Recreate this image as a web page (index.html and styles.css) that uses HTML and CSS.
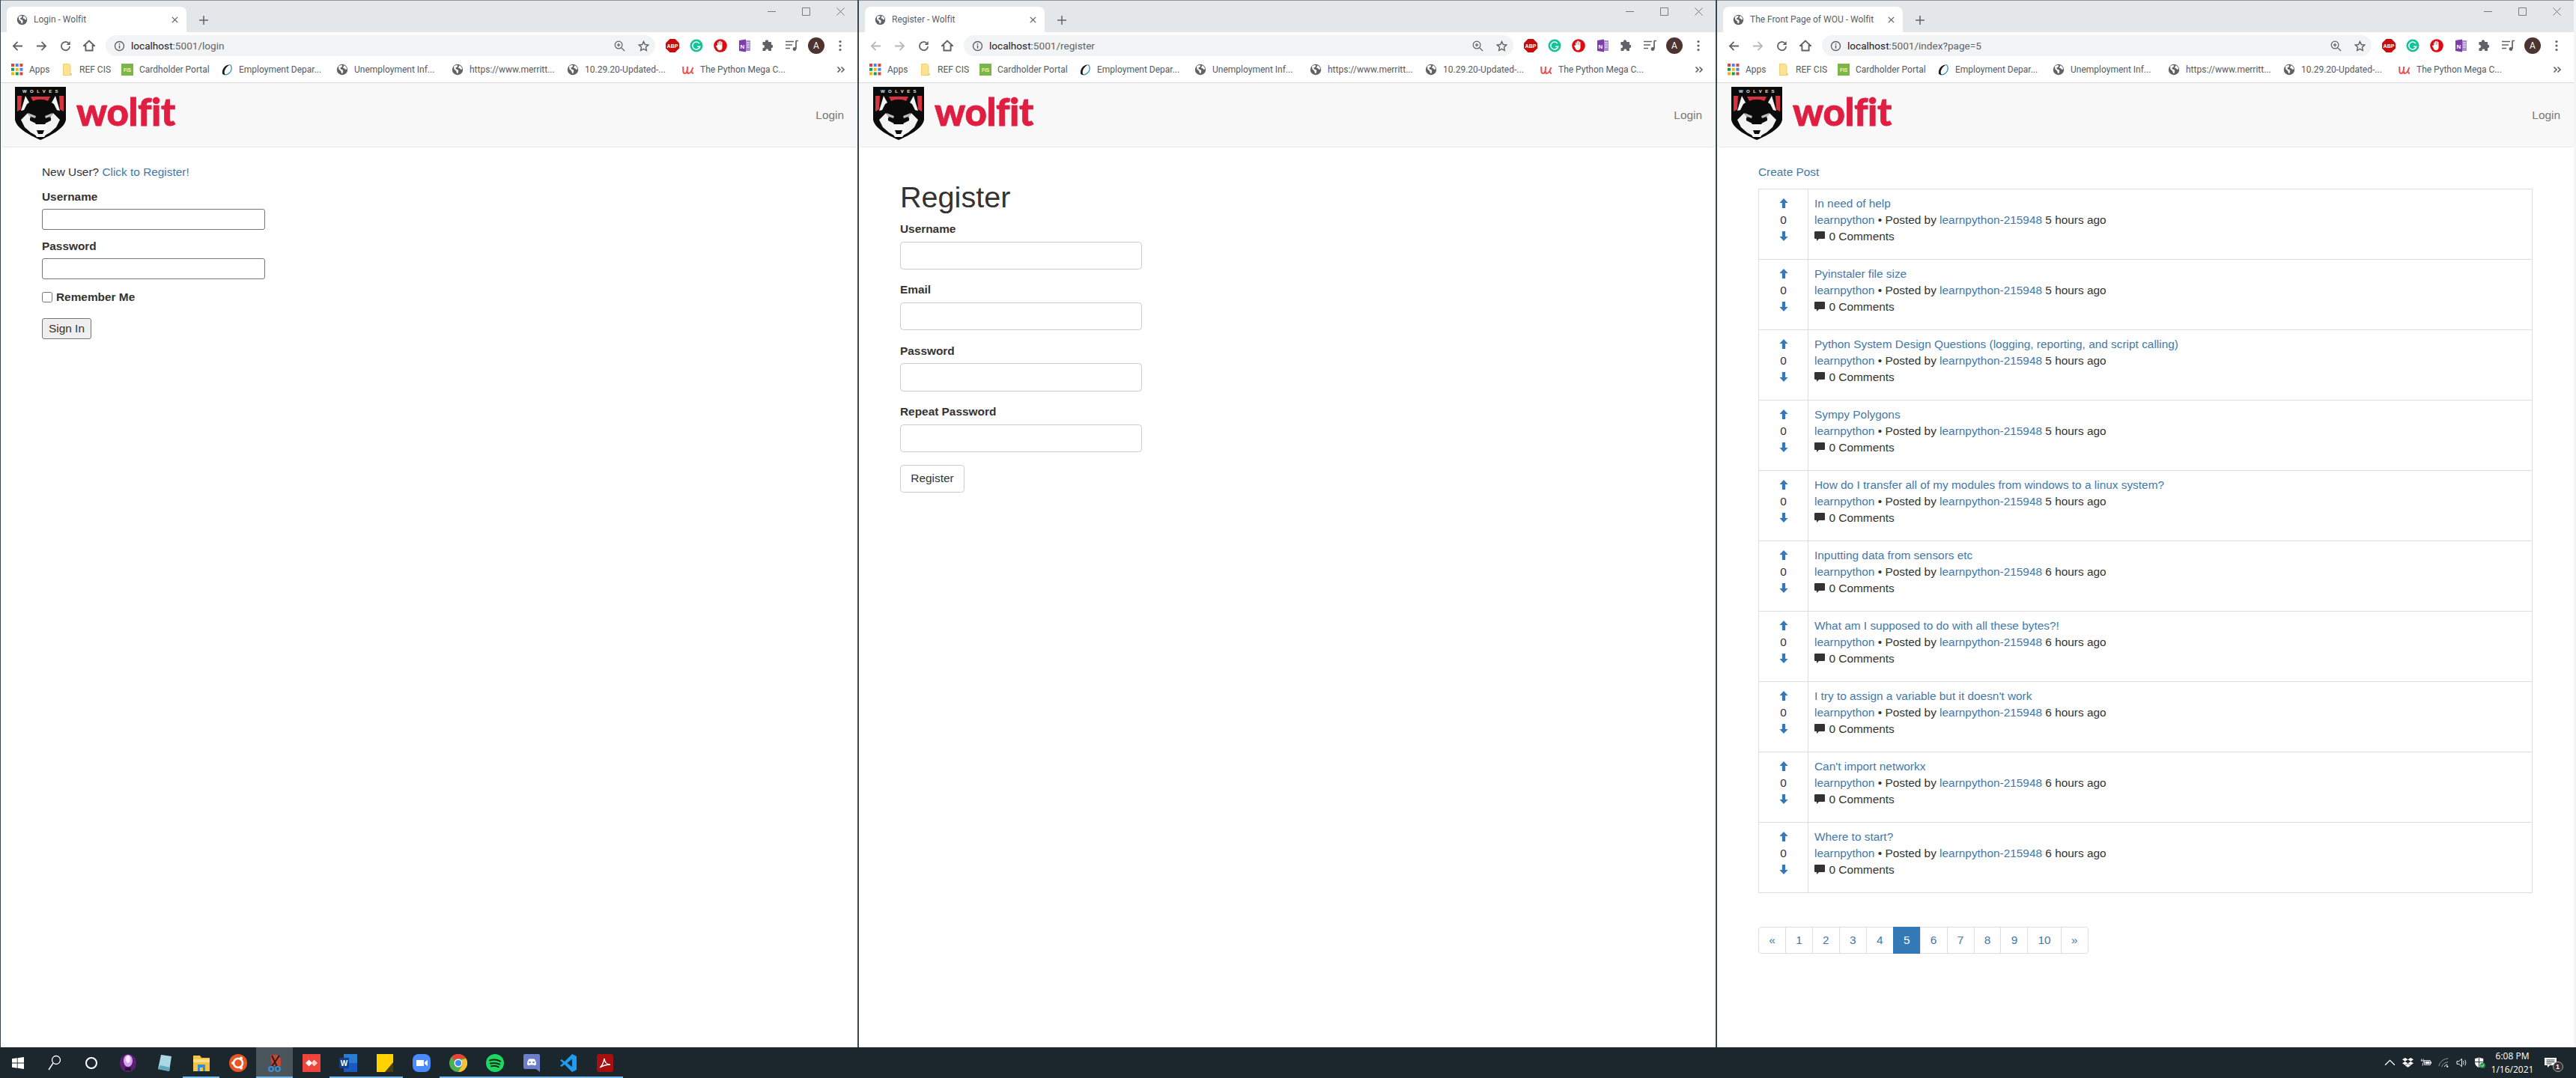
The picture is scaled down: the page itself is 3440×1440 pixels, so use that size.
FILE: index.html
```html
<!DOCTYPE html>
<html lang="en">
<head>
<meta charset="utf-8">
<title>Wolfit windows</title>
<link rel="stylesheet" href="styles.css">
</head>
<body>
<svg class="sprite" xmlns="http://www.w3.org/2000/svg">
  <symbol id="i-globe" viewBox="0 0 16 16"><circle cx="8" cy="8" r="7.2" fill="#5f6368"/><path fill="#fff" d="M3 3.6l3-1.6 2.4.6-1 2-2 1 .5 1.8 2.4.6 1 2-1 3.2-1.2-.4-1-3-2.6-2.2zM10.4 2.2l2.8 2 1 3.2-2 .4-1.2-1.6-2-.4z"/></symbol>
  <symbol id="i-x" viewBox="0 0 12 12"><path d="M2 2l8 8M10 2l-8 8" stroke="#5f6368" stroke-width="1.4" fill="none"/></symbol>
  <symbol id="i-plus" viewBox="0 0 14 14"><path d="M7 1v12M1 7h12" stroke="#5f6368" stroke-width="1.5" fill="none"/></symbol>
  <symbol id="i-back" viewBox="0 0 16 16"><path d="M15 8H2M8 2L2 8l6 6" stroke="currentColor" stroke-width="1.9" fill="none"/></symbol>
  <symbol id="i-fwd" viewBox="0 0 16 16"><path d="M1 8h13M8 2l6 6-6 6" stroke="currentColor" stroke-width="1.9" fill="none"/></symbol>
  <symbol id="i-reload" viewBox="0 0 16 16"><path d="M14 8.5A6 6 0 1 1 12 3.6" stroke="currentColor" stroke-width="1.9" fill="none"/><path fill="currentColor" d="M14.6 1v5.4H9.2z"/></symbol>
  <symbol id="i-home" viewBox="0 0 16 16"><path d="M8 1.5L1 8h2.4v6.5h9.200V8H15z" stroke="currentColor" stroke-width="1.900" fill="none"/></symbol>
  <symbol id="i-info" viewBox="0 0 16 16"><circle cx="8" cy="8" r="6.400" stroke="#5f6368" stroke-width="1.500" fill="none"/><path d="M8 7v4.500M8 4.200v1.600" stroke="#5f6368" stroke-width="1.600"/></symbol>
  <symbol id="i-zoom" viewBox="0 0 16 16"><circle cx="6.500" cy="6.500" r="5.200" stroke="#5f6368" stroke-width="1.300" fill="none"/><path d="M10.500 10.500l4.500 4.500M6.500 4v5M4 6.500h5" stroke="#5f6368" stroke-width="1.400"/></symbol>
  <symbol id="i-star" viewBox="0 0 16 16"><path d="M8 1.600l2 4.300 4.700.6-3.500 3.200.9 4.700L8 12.100l-4.100 2.300.9-4.700L1.300 6.500 6 5.900z" stroke="#5f6368" stroke-width="1.500" fill="none"/></symbol>
  <symbol id="i-abp" viewBox="0 0 18 18"><path fill="#c70d0d" d="M5.500 0h7L18 5.500v7L12.500 18h-7L0 12.500v-7z"/></symbol>
  <symbol id="i-g" viewBox="0 0 18 18"><circle cx="9" cy="9" r="8.500" fill="#15c39a"/><path d="M13 6.200A5 5 0 1 0 13.700 10.200H10" stroke="#fff" stroke-width="1.500" fill="none"/></symbol>
  <symbol id="i-hand" viewBox="0 0 18 18"><circle cx="9" cy="9" r="8.800" fill="#e0090f"/><path fill="#fff" d="M5 8.500V5.200c0-1 1.300-1 1.300 0V8h.4V3.600c0-1 1.300-1 1.300 0V8h.4V3.300c0-1 1.400-1 1.400 0V8h.4V4.600c0-1 1.300-1 1.300 0v7c0 2.200-1.500 3.600-3.500 3.600-1.600 0-2.600-.9-3.200-2.400L3.200 9.800c-.4-1 .8-1.500 1.300-.7z"/></symbol>
  <symbol id="i-one" viewBox="0 0 18 18"><path fill="#7e3ca8" d="M2 2l9-1.500v17L2 16z"/><path fill="#a98ad0" d="M11 2h6v14h-6z"/><path d="M12 5h4M12 8h4M12 11h4" stroke="#fff" stroke-width=".9"/></symbol>
  <symbol id="i-puzzle" viewBox="0 0 16 16"><path fill="#5f6368" d="M6.200 1.200c1.200 0 1.900.9 1.900 1.900v.5h3.400v3.300h.6c1.900 0 1.900 3.800 0 3.800h-.6v3.600H8.200v-.8c0-1.900-3.400-1.900-3.400 0v.8H1.300v-3.500h.8c1.900 0 1.900-3.800 0-3.800h-.8V3.600h3v-.5c0-1 .8-1.900 1.900-1.900z"/></symbol>
  <symbol id="i-music" viewBox="0 0 18 16"><path d="M0 2.500h11M0 7h9M0 11.500h6" stroke="#5f6368" stroke-width="1.500"/><path d="M13.500 1.500h3.500M14 2v10" stroke="#5f6368" stroke-width="1.700"/><circle cx="12" cy="12.500" r="2.400" fill="#5f6368"/></symbol>
  <symbol id="i-dots" viewBox="0 0 4 16"><circle cx="2" cy="2.500" r="1.600" fill="#5f6368"/><circle cx="2" cy="8" r="1.600" fill="#5f6368"/><circle cx="2" cy="13.500" r="1.600" fill="#5f6368"/></symbol>
  <symbol id="i-apps" viewBox="0 0 14 14"><path fill="#db4437" d="M0 0h3.500v3.500H0z"/><path fill="#4285f4" d="M5 0h3.500v3.500H5z"/><path fill="#db4437" d="M10 0h3.500v3.500H10z"/><path fill="#0f9d58" d="M0 5h3.500v3.500H0z"/><path fill="#f4b400" d="M5 5h3.500v3.500H5z"/><path fill="#4285f4" d="M10 5h3.500v3.500H10z"/><path fill="#f4b400" d="M0 10h3.500v3.500H0z"/><path fill="#0f9d58" d="M5 10h3.500v3.500H5z"/><path fill="#db4437" d="M10 10h3.500v3.500H10z"/></symbol>
  <symbol id="i-folder" viewBox="0 0 16 16"><path fill="#fde293" stroke="#f2d06b" d="M2.500.5h8l1.500 2v13H2.500z"/><path fill="#f2d06b" d="M11 13h3v2.500h-3z"/></symbol>
  <symbol id="i-fis" viewBox="0 0 16 16"><path fill="#7ab648" d="M0 0h16v16H0z"/></symbol>
  <symbol id="i-ring" viewBox="0 0 16 16"><path d="M12 1.500C14.500 3 15 7 13 10.500S7 15.500 4 14.500" fill="none" stroke="#2f8fb3" stroke-width="1.300"/><path d="M12.500 1.500C7 .5 1 6 2 13.500c1 1.500 3 1.500 4 1-3-2-1-10 6.500-13z" fill="#1c1c1c"/></symbol>
  <symbol id="i-udemy" viewBox="0 0 16 16"><path d="M1 4c1 4-1 9 2.500 9S7 8 7 4M7 6c-.500 4-.500 7 1.600 7S13 9 14.500 5M13 8c-1 3 0 5 2 5" stroke="#ec5252" stroke-width="2" fill="none"/></symbol>
  <symbol id="i-chev" viewBox="0 0 12 12"><path d="M1.500 2.500L5 6l-3.500 3.500M6.500 2.500L10 6l-3.500 3.500" stroke="#5f6368" stroke-width="1.700" fill="none"/></symbol>
  <symbol id="i-min" viewBox="0 0 12 12"><path d="M0 6h12" stroke="#6a6f73"/></symbol>
  <symbol id="i-max" viewBox="0 0 12 12"><path d="M.5.500h11v11H.5z" stroke="#6a6f73" fill="none"/></symbol>
  <symbol id="i-close" viewBox="0 0 12 12"><path d="M.5.500l11 11M11.500.500l-11 11" stroke="#6a6f73" fill="none"/></symbol>
  <symbol id="i-up" viewBox="0 0 12 14"><path fill="#337ab7" d="M6 0l6 6.500H8.300V14H3.700V6.500H0z"/></symbol>
  <symbol id="i-down" viewBox="0 0 12 14"><path fill="#337ab7" d="M6 14L0 7.500h3.700V0h4.600v7.500H12z"/></symbol>
  <symbol id="i-bubble" viewBox="0 0 14 13"><path fill="#333" d="M1 0h12a1 1 0 0 1 1 1v8a1 1 0 0 1-1 1H6l-3 3v-3H1a1 1 0 0 1-1-1V1a1 1 0 0 1 1-1z"/></symbol>
  <symbol id="i-logo" viewBox="0 0 68 71">
    <path fill="#0b0b0b" d="M0 0h68v44c-2 11-18 20-34 27C18 64 2 55 0 44z"/>
    <path fill="#d8323f" d="M3 12h6l-1 18-5 3zM65 12h-6l1 18 5 3zM21 13h26l-3 6c-6-3-14-3-20 0z"/>
    <path fill="#f4f4f4" d="M14 12l-6 20 4-1 4-8 3-2zM54 12l6 20-4-1-4-8-3-2z"/>
    <path fill="#f2f2f2" d="M8 44l9-9 5 7 6 8-2 6 4 10-9-5-8-7zM60 44l-9-9-5 7-6 8 2 6-4 10 9-5 8-7z"/>
    <path fill="#f7f7f7" d="M26 50h16l2 9-5 8H29l-5-8z"/>
    <path fill="#0b0b0b" d="M29 58h10l-2 5h-6z"/>
    <path fill="#0b0b0b" d="M20 41l8 2-2 5-6-3zM48 41l-8 2 2 5 6-3z"/>
    <path fill="#bdbdbd" d="M18 35l10 4-1 3-8-3zM50 35l-10 4 1 3 8-3z"/>
  </symbol>
  <symbol id="t-start" viewBox="0 0 16 16"><path fill="#fff" d="M0 2.300l6.800-1v6.300H0zM7.600 1.200L16 0v7.600H7.600zM0 8.400h6.800v6.300l-6.800-1zM7.600 8.400H16V16l-8.400-1.200z"/></symbol>
  <symbol id="t-search" viewBox="0 0 18 22"><circle cx="11" cy="7" r="5.500" stroke="#fff" stroke-width="1.300" fill="none"/><path d="M7 11L1 20" stroke="#fff" stroke-width="1.400"/></symbol>
  <symbol id="t-cortana" viewBox="0 0 18 18"><circle cx="9" cy="9" r="7" stroke="#fff" stroke-width="2" fill="none"/></symbol>
  <symbol id="t-bulb" viewBox="0 0 24 24"><ellipse cx="12" cy="12" rx="11" ry="12" fill="#5d1f73"/><ellipse cx="12" cy="9" rx="6" ry="8" fill="#d9a5ef"/><ellipse cx="12" cy="7" rx="3" ry="5" fill="#f8e9ff"/><path d="M8 18h8v4H8z" fill="#26112e"/></symbol>
  <symbol id="t-note" viewBox="0 0 24 24"><path fill="#a9d7e4" d="M7 1l14 2-3 20-15-3z"/><path fill="#5fa8bd" d="M3 20l15 3 1-5-13-3z"/></symbol>
  <symbol id="t-explorer" viewBox="0 0 24 24"><path fill="#f6c344" d="M1 2h9l2 3h11v18H1z"/><path fill="#fde08a" d="M1 7h22v4H1z"/><path fill="#2f8fd8" d="M7 14h10v9h-3v-5h-4v5H7z"/></symbol>
  <symbol id="t-ubuntu" viewBox="0 0 24 24"><circle cx="12" cy="12" r="12" fill="#e95420"/><circle cx="12" cy="12" r="6" fill="none" stroke="#fff" stroke-width="2.500"/><circle cx="5" cy="12" r="2" fill="#fff"/><circle cx="16" cy="5.500" r="2" fill="#fff"/><circle cx="16" cy="18.500" r="2" fill="#fff"/></symbol>
  <symbol id="t-snip" viewBox="0 0 24 24"><path fill="#c8452f" d="M6 1h9l5 5v10H8z"/><path d="M8 2l8 17M18 2L7 18" stroke="#1b1b1b" stroke-width="1.800"/><circle cx="7" cy="20" r="3" fill="none" stroke="#3b8fd4" stroke-width="2"/><circle cx="16" cy="20" r="3" fill="none" stroke="#3b8fd4" stroke-width="2"/></symbol>
  <symbol id="t-any" viewBox="0 0 24 24"><path fill="#ef443b" d="M0 0h24v24H0z"/><path fill="#fff" d="M8.500 7.500L13 12l-4.500 4.500L4 12z"/><path fill="#ffd0cc" d="M15.500 7.500L20 12l-4.500 4.500L11.500 12z"/></symbol>
  <symbol id="t-word" viewBox="0 0 24 24"><path fill="#2b7cd3" d="M6 0h18v24H6z"/><path fill="#185abd" d="M6 12h18v12H6z"/><path fill="#103f91" d="M0 5h13v14H0z"/></symbol>
  <symbol id="t-sticky" viewBox="0 0 24 24"><path fill="#ffd200" d="M1 0h22v24H1z"/><path fill="#4a3e12" d="M23 11v13H12z"/></symbol>
  <symbol id="t-zoom" viewBox="0 0 24 24"><rect width="24" height="24" rx="8" fill="#4a8cff"/><path fill="#fff" d="M5 8h10v8H5zM16 11l4-3v8l-4-3z"/></symbol>
  <symbol id="t-chrome" viewBox="0 0 24 24"><circle cx="12" cy="12" r="12" fill="#4caf50"/><path fill="#ea4335" d="M12 0a12 12 0 0 1 10.400 6H12a6 6 0 0 0-5.200 3L3 3.500A12 12 0 0 1 12 0z"/><path fill="#fbc02d" d="M22.400 6A12 12 0 0 1 12 24l5.200-9A6 6 0 0 0 16 8z"/><circle cx="12" cy="12" r="5.500" fill="#fff"/><circle cx="12" cy="12" r="4" fill="#4285f4"/></symbol>
  <symbol id="t-spotify" viewBox="0 0 24 24"><circle cx="12" cy="12" r="12" fill="#1ed760"/><path d="M5 8.500c5-1.500 10-1 14 1.200M6 12.500c4-1 8.500-.7 12 1.200M7 16.300c3.500-.8 7-.5 9.800 1" stroke="#13261b" stroke-width="2" fill="none" stroke-linecap="round"/></symbol>
  <symbol id="t-discord" viewBox="0 0 24 24"><path fill="#6d7fc9" d="M3 0h18a2 2 0 0 1 2 2v22l-5-4H3a2 2 0 0 1-2-2V2a2 2 0 0 1 2-2z"/><path fill="#fff" d="M6 14c0-4 1.500-7 3-7.500h6C16.500 7 18 10 18 14c-1.500 1.500-3 1.500-3.500.5h-5C9 15.500 7.500 15.500 6 14z"/><circle cx="9.500" cy="11" r="1.300" fill="#6d7fc9"/><circle cx="14.500" cy="11" r="1.300" fill="#6d7fc9"/></symbol>
  <symbol id="t-vscode" viewBox="0 0 24 24"><path fill="#1f9cf0" d="M17 0l6 3v18l-6 3L7 14l-4 3-2-1.500L5 12 1 8.500 3 7l4 3z"/><path fill="#1c2a31" d="M17 6.500L10.500 12l6.500 5.500z"/></symbol>
  <symbol id="t-acro" viewBox="0 0 24 24"><rect width="22" height="24" x="1" rx="3" fill="#a60f0f"/><path d="M5 18c3-2 5-7 6-12 .5 5 3 8 8 8-5 0-9 1-14 4z" fill="none" stroke="#fff" stroke-width="1.300"/></symbol>
  <symbol id="t-up" viewBox="0 0 14 8"><path d="M1 7l6-6 6 6" stroke="#fff" stroke-width="1.200" fill="none"/></symbol>
  <symbol id="t-drop" viewBox="0 0 16 14"><path fill="#fff" d="M4 0l4 2.500L4 5 0 2.500zM12 0l4 2.500L12 5 8 2.500zM4 5.400l4 2.500-4 2.500-4-2.500zM12 5.400l4 2.500-4 2.500-4-2.500zM4 11l4-2.400 4 2.400-4 2.600z"/></symbol>
  <symbol id="t-power" viewBox="0 0 18 14"><path d="M2 1v3M5 1v3M1 4h5v2l-2 2v4" stroke="#fff" fill="none"/><path d="M6.500 3.500h9.500v7H6.500z" stroke="#fff" fill="none"/><path d="M8 5h7v4H8zM16.500 5.500H18v3h-1.500z" fill="#fff"/></symbol>
  <symbol id="t-wifi" viewBox="0 0 16 14"><path d="M1 12C2 6 7 2 14 1M5 13c1-4 4-6 9-7" stroke="#9aa3a8" fill="none"/><path d="M9 13c.500-2 2-3 4-3" stroke="#fff" fill="none"/><circle cx="13" cy="12.500" r="1.200" fill="#fff"/></symbol>
  <symbol id="t-vol" viewBox="0 0 16 14"><path d="M1 5h3l4-3.500v11L4 9H1z" stroke="#fff" fill="none"/><path d="M10 4.500c1 1.500 1 3.500 0 5M12.500 3c1.500 2.500 1.500 5.500 0 8" stroke="#fff" fill="none"/></symbol>
  <symbol id="t-shield" viewBox="0 0 16 16"><path fill="#fff" d="M7 0c2 1.500 4 2 6 2v6c0 3-3 6-6 7-3-1-6-4-6-7V2c2 0 4-.5 6-2z"/><path d="M7 0v15M1 7h12" stroke="#1c272d"/><circle cx="12" cy="12" r="3.800" fill="#1f9a4d"/><path d="M10 12l1.500 1.500 2.500-3" stroke="#fff" fill="none"/></symbol>
  <symbol id="t-notif" viewBox="0 0 16 14"><path fill="#fff" d="M0 0h16v10H7l-3 3v-3H0z"/><path d="M2.500 3h11M2.500 5.500h11M2.500 8h7" stroke="#1c272d"/></symbol>
</svg>

<div class="desktop">
  <section class="window win-one">
    <div class="tabstrip">
      <div class="tab"><svg class="fav"><use href="#i-globe"/></svg><span class="tab-title">Login - Wolfit</span><svg class="tab-x"><use href="#i-x"/></svg></div>
      <svg class="new-tab"><use href="#i-plus"/></svg>
      <div class="win-controls"><span class="win-btn"><svg class="win-ic"><use href="#i-min"/></svg></span><span class="win-btn"><svg class="win-ic"><use href="#i-max"/></svg></span><span class="win-btn"><svg class="win-ic"><use href="#i-close"/></svg></span></div>
    </div>
    <div class="toolbar">
      <span class="tool"><svg class="tool-ic"><use href="#i-back"/></svg></span><span class="tool"><svg class="tool-ic"><use href="#i-fwd"/></svg></span><span class="tool"><svg class="tool-ic"><use href="#i-reload"/></svg></span><span class="tool"><svg class="tool-ic home"><use href="#i-home"/></svg></span>
      <div class="omnibox"><svg class="omni-info"><use href="#i-info"/></svg><span class="url"><b class="host">localhost</b>:5001/login</span><svg class="omni-ic"><use href="#i-zoom"/></svg><svg class="omni-ic star"><use href="#i-star"/></svg></div>
      <span class="tool"><svg class="ext" viewBox="0 0 18 18"><use href="#i-abp"/><text x="9" y="11.500" text-anchor="middle" class="svg-abp">ABP</text></svg></span><span class="tool"><svg class="ext"><use href="#i-g"/></svg></span><span class="tool"><svg class="ext"><use href="#i-hand"/></svg></span><span class="tool"><svg class="ext" viewBox="0 0 18 18"><use href="#i-one"/><text x="6.500" y="12.500" text-anchor="middle" class="svg-one">N</text></svg></span><span class="tool"><svg class="ext"><use href="#i-puzzle"/></svg></span><span class="tool"><svg class="ext"><use href="#i-music"/></svg></span><span class="tool"><span class="avatar">A</span></span><span class="tool"><svg class="dots"><use href="#i-dots"/></svg></span>
    </div>
    <div class="bookmarks">
      <span class="bm bm-apps"><svg class="bm-ic"><use href="#i-apps"/></svg>Apps</span><span class="bm bm-ref"><svg class="bm-ic"><use href="#i-folder"/></svg>REF CIS</span><span class="bm bm-card"><svg class="bm-ic" viewBox="0 0 16 16"><use href="#i-fis"/><text x="8" y="11" text-anchor="middle" class="svg-fis">FIS</text></svg>Cardholder Portal</span><span class="bm bm-wide"><svg class="bm-ic"><use href="#i-ring"/></svg>Employment Depar...</span><span class="bm bm-wide"><svg class="bm-ic"><use href="#i-globe"/></svg>Unemployment Inf...</span><span class="bm bm-wide"><svg class="bm-ic"><use href="#i-globe"/></svg>https://www.merritt...</span><span class="bm bm-wide"><svg class="bm-ic"><use href="#i-globe"/></svg>10.29.20-Updated-...</span><span class="bm bm-wide"><svg class="bm-ic"><use href="#i-udemy"/></svg>The Python Mega C...</span>
      <svg class="bm-more"><use href="#i-chev"/></svg>
    </div>
    <nav class="navbar">
      <a class="brand"><svg class="logo" viewBox="0 0 68 71"><use href="#i-logo"/><text x="36" y="7.500" text-anchor="middle" class="svg-wolves">WOLVES</text></svg><span class="wordmark">wolfit</span></a>
      <a class="nav-login">Login</a>
    </nav>
    <main class="page login-page">
      <p class="line">New User? <a class="link">Click to Register!</a></p>
      <form class="login-form">
        <label class="field-label">Username</label>
        <input class="plain-input" type="text">
        <label class="field-label">Password</label>
        <input class="plain-input" type="password">
        <label class="remember"><input class="check" type="checkbox">Remember Me</label>
        <button class="plain-btn" type="button">Sign In</button>
      </form>
    </main>
  </section>

  <section class="window">
    <div class="tabstrip">
      <div class="tab"><svg class="fav"><use href="#i-globe"/></svg><span class="tab-title">Register - Wolfit</span><svg class="tab-x"><use href="#i-x"/></svg></div>
      <svg class="new-tab"><use href="#i-plus"/></svg>
      <div class="win-controls"><span class="win-btn"><svg class="win-ic"><use href="#i-min"/></svg></span><span class="win-btn"><svg class="win-ic"><use href="#i-max"/></svg></span><span class="win-btn"><svg class="win-ic"><use href="#i-close"/></svg></span></div>
    </div>
    <div class="toolbar">
      <span class="tool off"><svg class="tool-ic"><use href="#i-back"/></svg></span><span class="tool off"><svg class="tool-ic"><use href="#i-fwd"/></svg></span><span class="tool"><svg class="tool-ic"><use href="#i-reload"/></svg></span><span class="tool"><svg class="tool-ic home"><use href="#i-home"/></svg></span>
      <div class="omnibox"><svg class="omni-info"><use href="#i-info"/></svg><span class="url"><b class="host">localhost</b>:5001/register</span><svg class="omni-ic"><use href="#i-zoom"/></svg><svg class="omni-ic star"><use href="#i-star"/></svg></div>
      <span class="tool"><svg class="ext" viewBox="0 0 18 18"><use href="#i-abp"/><text x="9" y="11.500" text-anchor="middle" class="svg-abp">ABP</text></svg></span><span class="tool"><svg class="ext"><use href="#i-g"/></svg></span><span class="tool"><svg class="ext"><use href="#i-hand"/></svg></span><span class="tool"><svg class="ext" viewBox="0 0 18 18"><use href="#i-one"/><text x="6.500" y="12.500" text-anchor="middle" class="svg-one">N</text></svg></span><span class="tool"><svg class="ext"><use href="#i-puzzle"/></svg></span><span class="tool"><svg class="ext"><use href="#i-music"/></svg></span><span class="tool"><span class="avatar">A</span></span><span class="tool"><svg class="dots"><use href="#i-dots"/></svg></span>
    </div>
    <div class="bookmarks">
      <span class="bm bm-apps"><svg class="bm-ic"><use href="#i-apps"/></svg>Apps</span><span class="bm bm-ref"><svg class="bm-ic"><use href="#i-folder"/></svg>REF CIS</span><span class="bm bm-card"><svg class="bm-ic" viewBox="0 0 16 16"><use href="#i-fis"/><text x="8" y="11" text-anchor="middle" class="svg-fis">FIS</text></svg>Cardholder Portal</span><span class="bm bm-wide"><svg class="bm-ic"><use href="#i-ring"/></svg>Employment Depar...</span><span class="bm bm-wide"><svg class="bm-ic"><use href="#i-globe"/></svg>Unemployment Inf...</span><span class="bm bm-wide"><svg class="bm-ic"><use href="#i-globe"/></svg>https://www.merritt...</span><span class="bm bm-wide"><svg class="bm-ic"><use href="#i-globe"/></svg>10.29.20-Updated-...</span><span class="bm bm-wide"><svg class="bm-ic"><use href="#i-udemy"/></svg>The Python Mega C...</span>
      <svg class="bm-more"><use href="#i-chev"/></svg>
    </div>
    <nav class="navbar">
      <a class="brand"><svg class="logo" viewBox="0 0 68 71"><use href="#i-logo"/><text x="36" y="7.500" text-anchor="middle" class="svg-wolves">WOLVES</text></svg><span class="wordmark">wolfit</span></a>
      <a class="nav-login">Login</a>
    </nav>
    <main class="page">
      <h1 class="page-title">Register</h1>
      <form class="register-form">
        <label class="field-label">Username</label>
        <input class="form-input" type="text">
        <label class="field-label">Email</label>
        <input class="form-input" type="text">
        <label class="field-label">Password</label>
        <input class="form-input" type="password">
        <label class="field-label">Repeat Password</label>
        <input class="form-input" type="password">
        <button class="form-btn" type="button">Register</button>
      </form>
    </main>
  </section>

  <section class="window win-three">
    <div class="tabstrip">
      <div class="tab"><svg class="fav"><use href="#i-globe"/></svg><span class="tab-title">The Front Page of WOU - Wolfit</span><svg class="tab-x"><use href="#i-x"/></svg></div>
      <svg class="new-tab"><use href="#i-plus"/></svg>
      <div class="win-controls"><span class="win-btn"><svg class="win-ic"><use href="#i-min"/></svg></span><span class="win-btn"><svg class="win-ic"><use href="#i-max"/></svg></span><span class="win-btn"><svg class="win-ic"><use href="#i-close"/></svg></span></div>
    </div>
    <div class="toolbar">
      <span class="tool"><svg class="tool-ic"><use href="#i-back"/></svg></span><span class="tool off"><svg class="tool-ic"><use href="#i-fwd"/></svg></span><span class="tool"><svg class="tool-ic"><use href="#i-reload"/></svg></span><span class="tool"><svg class="tool-ic home"><use href="#i-home"/></svg></span>
      <div class="omnibox"><svg class="omni-info"><use href="#i-info"/></svg><span class="url"><b class="host">localhost</b>:5001/index?page=5</span><svg class="omni-ic"><use href="#i-zoom"/></svg><svg class="omni-ic star"><use href="#i-star"/></svg></div>
      <span class="tool"><svg class="ext" viewBox="0 0 18 18"><use href="#i-abp"/><text x="9" y="11.500" text-anchor="middle" class="svg-abp">ABP</text></svg></span><span class="tool"><svg class="ext"><use href="#i-g"/></svg></span><span class="tool"><svg class="ext"><use href="#i-hand"/></svg></span><span class="tool"><svg class="ext" viewBox="0 0 18 18"><use href="#i-one"/><text x="6.500" y="12.500" text-anchor="middle" class="svg-one">N</text></svg></span><span class="tool"><svg class="ext"><use href="#i-puzzle"/></svg></span><span class="tool"><svg class="ext"><use href="#i-music"/></svg></span><span class="tool"><span class="avatar">A</span></span><span class="tool"><svg class="dots"><use href="#i-dots"/></svg></span>
    </div>
    <div class="bookmarks">
      <span class="bm bm-apps"><svg class="bm-ic"><use href="#i-apps"/></svg>Apps</span><span class="bm bm-ref"><svg class="bm-ic"><use href="#i-folder"/></svg>REF CIS</span><span class="bm bm-card"><svg class="bm-ic" viewBox="0 0 16 16"><use href="#i-fis"/><text x="8" y="11" text-anchor="middle" class="svg-fis">FIS</text></svg>Cardholder Portal</span><span class="bm bm-wide"><svg class="bm-ic"><use href="#i-ring"/></svg>Employment Depar...</span><span class="bm bm-wide"><svg class="bm-ic"><use href="#i-globe"/></svg>Unemployment Inf...</span><span class="bm bm-wide"><svg class="bm-ic"><use href="#i-globe"/></svg>https://www.merritt...</span><span class="bm bm-wide"><svg class="bm-ic"><use href="#i-globe"/></svg>10.29.20-Updated-...</span><span class="bm bm-wide"><svg class="bm-ic"><use href="#i-udemy"/></svg>The Python Mega C...</span>
      <svg class="bm-more"><use href="#i-chev"/></svg>
    </div>
    <nav class="navbar">
      <a class="brand"><svg class="logo" viewBox="0 0 68 71"><use href="#i-logo"/><text x="36" y="7.500" text-anchor="middle" class="svg-wolves">WOLVES</text></svg><span class="wordmark">wolfit</span></a>
      <a class="nav-login">Login</a>
    </nav>
    <main class="page index-page">
      <p class="line"><a class="link">Create Post</a></p>
      <table class="posts">
        <tr><td class="votes"><svg class="arrow"><use href="#i-up"/></svg><span class="score">0</span><svg class="arrow"><use href="#i-down"/></svg></td><td class="post"><a class="link">In need of help</a><br><a class="link">learnpython</a> • Posted by <a class="link">learnpython-215948</a> 5 hours ago<br><svg class="bubble"><use href="#i-bubble"/></svg>0 Comments</td></tr>
        <tr><td class="votes"><svg class="arrow"><use href="#i-up"/></svg><span class="score">0</span><svg class="arrow"><use href="#i-down"/></svg></td><td class="post"><a class="link">Pyinstaler file size</a><br><a class="link">learnpython</a> • Posted by <a class="link">learnpython-215948</a> 5 hours ago<br><svg class="bubble"><use href="#i-bubble"/></svg>0 Comments</td></tr>
        <tr><td class="votes"><svg class="arrow"><use href="#i-up"/></svg><span class="score">0</span><svg class="arrow"><use href="#i-down"/></svg></td><td class="post"><a class="link">Python System Design Questions (logging, reporting, and script calling)</a><br><a class="link">learnpython</a> • Posted by <a class="link">learnpython-215948</a> 5 hours ago<br><svg class="bubble"><use href="#i-bubble"/></svg>0 Comments</td></tr>
        <tr><td class="votes"><svg class="arrow"><use href="#i-up"/></svg><span class="score">0</span><svg class="arrow"><use href="#i-down"/></svg></td><td class="post"><a class="link">Sympy Polygons</a><br><a class="link">learnpython</a> • Posted by <a class="link">learnpython-215948</a> 5 hours ago<br><svg class="bubble"><use href="#i-bubble"/></svg>0 Comments</td></tr>
        <tr><td class="votes"><svg class="arrow"><use href="#i-up"/></svg><span class="score">0</span><svg class="arrow"><use href="#i-down"/></svg></td><td class="post"><a class="link">How do I transfer all of my modules from windows to a linux system?</a><br><a class="link">learnpython</a> • Posted by <a class="link">learnpython-215948</a> 5 hours ago<br><svg class="bubble"><use href="#i-bubble"/></svg>0 Comments</td></tr>
        <tr><td class="votes"><svg class="arrow"><use href="#i-up"/></svg><span class="score">0</span><svg class="arrow"><use href="#i-down"/></svg></td><td class="post"><a class="link">Inputting data from sensors etc</a><br><a class="link">learnpython</a> • Posted by <a class="link">learnpython-215948</a> 6 hours ago<br><svg class="bubble"><use href="#i-bubble"/></svg>0 Comments</td></tr>
        <tr><td class="votes"><svg class="arrow"><use href="#i-up"/></svg><span class="score">0</span><svg class="arrow"><use href="#i-down"/></svg></td><td class="post"><a class="link">What am I supposed to do with all these bytes?!</a><br><a class="link">learnpython</a> • Posted by <a class="link">learnpython-215948</a> 6 hours ago<br><svg class="bubble"><use href="#i-bubble"/></svg>0 Comments</td></tr>
        <tr><td class="votes"><svg class="arrow"><use href="#i-up"/></svg><span class="score">0</span><svg class="arrow"><use href="#i-down"/></svg></td><td class="post"><a class="link">I try to assign a variable but it doesn't work</a><br><a class="link">learnpython</a> • Posted by <a class="link">learnpython-215948</a> 6 hours ago<br><svg class="bubble"><use href="#i-bubble"/></svg>0 Comments</td></tr>
        <tr><td class="votes"><svg class="arrow"><use href="#i-up"/></svg><span class="score">0</span><svg class="arrow"><use href="#i-down"/></svg></td><td class="post"><a class="link">Can't import networkx</a><br><a class="link">learnpython</a> • Posted by <a class="link">learnpython-215948</a> 6 hours ago<br><svg class="bubble"><use href="#i-bubble"/></svg>0 Comments</td></tr>
        <tr><td class="votes"><svg class="arrow"><use href="#i-up"/></svg><span class="score">0</span><svg class="arrow"><use href="#i-down"/></svg></td><td class="post"><a class="link">Where to start?</a><br><a class="link">learnpython</a> • Posted by <a class="link">learnpython-215948</a> 6 hours ago<br><svg class="bubble"><use href="#i-bubble"/></svg>0 Comments</td></tr>
      </table>
      <div class="pagination"><a class="pg first">«</a><a class="pg">1</a><a class="pg">2</a><a class="pg">3</a><a class="pg">4</a><a class="pg active">5</a><a class="pg">6</a><a class="pg">7</a><a class="pg">8</a><a class="pg">9</a><a class="pg">10</a><a class="pg last">»</a></div>
    </main>
  </section>
</div>

<footer class="taskbar">
  <span class="sys-slot"><svg class="t-start"><use href="#t-start"/></svg></span>
  <span class="sys-slot"><svg class="t-search"><use href="#t-search"/></svg></span>
  <span class="sys-slot"><svg class="t-cortana"><use href="#t-cortana"/></svg></span>
  <span class="app-slot"><svg class="t-app"><use href="#t-bulb"/></svg></span>
  <span class="app-slot"><svg class="t-app"><use href="#t-note"/></svg></span>
  <span class="app-slot open"><svg class="t-app"><use href="#t-explorer"/></svg></span>
  <span class="app-slot"><svg class="t-app"><use href="#t-ubuntu"/></svg></span>
  <span class="app-slot open current"><svg class="t-app"><use href="#t-snip"/></svg></span>
  <span class="app-slot"><svg class="t-app"><use href="#t-any"/></svg></span>
  <span class="app-slot open"><svg class="t-app" viewBox="0 0 24 24"><use href="#t-word"/><text x="6.500" y="16" text-anchor="middle" class="svg-word">W</text></svg></span>
  <span class="app-slot open"><svg class="t-app"><use href="#t-sticky"/></svg></span>
  <span class="app-slot"><svg class="t-app"><use href="#t-zoom"/></svg></span>
  <span class="app-slot open"><svg class="t-app"><use href="#t-chrome"/></svg></span>
  <span class="app-slot open"><svg class="t-app"><use href="#t-spotify"/></svg></span>
  <span class="app-slot open"><svg class="t-app"><use href="#t-discord"/></svg></span>
  <span class="app-slot open"><svg class="t-app"><use href="#t-vscode"/></svg></span>
  <span class="app-slot open"><svg class="t-app"><use href="#t-acro"/></svg></span>
  <div class="tray">
    <span class="tray-slot"><svg class="tray-ic"><use href="#t-up"/></svg></span>
    <span class="tray-slot"><svg class="tray-ic"><use href="#t-drop"/></svg></span>
    <span class="tray-slot"><svg class="tray-ic"><use href="#t-power"/></svg></span>
    <span class="tray-slot"><svg class="tray-ic"><use href="#t-wifi"/></svg></span>
    <span class="tray-slot"><svg class="tray-ic"><use href="#t-vol"/></svg></span>
    <span class="tray-slot"><svg class="tray-ic"><use href="#t-shield"/></svg></span>
    <span class="clock"><span>6:08 PM</span><span>1/16/2021</span></span>
    <span class="notif"><svg class="notif-ic"><use href="#t-notif"/></svg><span class="notif-count">1</span></span>
  </div>
</footer>
</body>
</html>
```
FILE: styles.css
```css
* { box-sizing: border-box; }
html, body { margin: 0; height: 100%; }
body {
  width: 3440px;
  height: 1440px;
  overflow: hidden;
  display: flex;
  flex-direction: column;
  background: #fff;
  font-family: "Liberation Sans", Arial, sans-serif;
  font-size: 15.4px;
  line-height: 22px;
  color: #333;
  font-variant-ligatures: none;
}
.sprite { width: 0; height: 0; display: block; flex: none; }
.svg-abp { font: 700 7px "Liberation Sans", sans-serif; fill: #fff; }
.svg-one { font: 700 8px "Liberation Sans", sans-serif; fill: #fff; }
.svg-fis { font: 700 6.5px "Liberation Sans", sans-serif; fill: #e6f4d4; }
.svg-wolves { font: 700 6px "Liberation Sans", sans-serif; fill: #e8e8e8; letter-spacing: 4.4px; }
.svg-word { font: 700 10px "Liberation Sans", sans-serif; fill: #fff; }

.desktop { display: flex; height: 1399px; flex: none; }
.window {
  width: 1146px;
  flex: none;
  display: flex;
  flex-direction: column;
  border-left: 2px solid #36454e;
  background: #fff;
}
.win-one { width: 1145px; border-left-width: 1px; }
.win-three { width: 1149px; border-right: 3px solid #f4f5f6; }

/* Browser chrome */
.tabstrip {
  height: 43px;
  flex: none;
  display: flex;
  align-items: flex-start;
  padding-left: 8px;
  border-top: 1px solid #8d9599;
  background: #e4e7ea;
}
.tab {
  width: 240px;
  height: 34px;
  margin-top: 8px;
  display: flex;
  align-items: center;
  padding: 0 10px 0 13px;
  background: #fff;
  border-radius: 8px 8px 0 0;
}
.fav { width: 15px; height: 15px; flex: none; }
.tab-title {
  flex: 1;
  margin-left: 8px;
  font: 12px Roboto, sans-serif;
  font-variant-ligatures: none;
  color: #5a5e63;
  white-space: nowrap;
}
.tab-x { width: 11px; height: 11px; flex: none; }
.new-tab { width: 14px; height: 14px; margin: 19px 0 0 16px; flex: none; }
.win-controls { display: flex; margin-left: auto; }
.win-btn { width: 46px; height: 28px; display: flex; align-items: center; justify-content: center; }
.win-ic { width: 11px; height: 11px; }

.toolbar {
  height: 36px;
  flex: none;
  display: flex;
  align-items: flex-start;
  padding: 4px 7px 0 6px;
  background: #fff;
}
.tool {
  width: 32px;
  height: 28px;
  flex: none;
  display: flex;
  align-items: center;
  justify-content: center;
  color: #5f6368;
}
.off { color: #b5b8bc; }
.tool-ic { width: 15px; height: 15px; }
.home { width: 16px; height: 16px; }
.omnibox {
  flex: 1;
  height: 28px;
  margin: 0 7px 0 6px;
  display: flex;
  align-items: center;
  padding: 0 8px 0 11px;
  background: #f1f3f4;
  border-radius: 14px;
}
.omni-info { width: 15px; height: 15px; flex: none; }
.url {
  flex: 1;
  margin-left: 8px;
  font: 13.6px Roboto, sans-serif;
  color: #5f6368;
  white-space: nowrap;
}
.host { font-weight: 400; color: #202124; }
.omni-ic { width: 15px; height: 15px; flex: none; margin-right: 17px; }
.omni-ic.star { margin-right: 0; }
.ext { width: 18px; height: 18px; }
.avatar {
  width: 22px;
  height: 22px;
  display: flex;
  align-items: center;
  justify-content: center;
  border-radius: 50%;
  background: #4e342e;
  color: #fff;
  font: 12px Roboto, sans-serif;
}
.dots { width: 4px; height: 16px; }

.bookmarks {
  height: 32px;
  flex: none;
  display: flex;
  align-items: center;
  padding: 0 16px 4px 14px;
  background: #fff;
  box-shadow: inset 0 -1px 0 #d6d8da;
  font: 12px Roboto, sans-serif;
  color: #555a5f;
}
.bm { display: flex; align-items: center; flex: none; white-space: nowrap; }
.bm-apps { width: 67px; }
.bm-ref { width: 80px; }
.bm-card { width: 133px; }
.bm-wide { width: 154px; }
.bm-ic { width: 16px; height: 16px; margin-right: 8px; flex: none; }
.bm-more { width: 12px; height: 12px; margin-left: auto; flex: none; }

/* Site navbar */
.navbar {
  height: 86px;
  flex: none;
  display: flex;
  justify-content: space-between;
  align-items: center;
  padding: 0 18px 0 18px;
  margin-left: 1px;
  background: #f8f8f8;
  border-bottom: 1px solid #e7e7e7;
  border-radius: 0 0 4px 4px;
}
.brand { display: flex; align-items: flex-start; gap: 14px; height: 100%; padding-top: 5px; }
.logo { width: 68px; height: 71px; flex: none; }
.wordmark {
  font: 900 51px/56px Lato, sans-serif;
  font-variant-ligatures: none;
  color: #e01e42;
  -webkit-text-stroke: 0.8px #e01e42;
  letter-spacing: -0.4px;
  padding-top: 5px;
}
.nav-login { color: #777; }

/* Page bodies */
.page { flex: 1; padding-left: 55px; }
.line { margin: 22px 0 11px; }
.link { color: #4279aa; }
.field-label { display: block; font-weight: 700; margin-bottom: 5px; }
.login-form { display: flex; flex-direction: column; align-items: flex-start; }
.plain-input {
  display: block;
  width: 298px;
  height: 28px;
  margin-bottom: 11px;
  border: 1px solid #767676;
  border-radius: 3px;
  background: #fff;
}
.remember { display: flex; align-items: center; font-weight: 700; margin-top: 2px; }
.check { width: 14px; height: 14px; margin: 0 5px 0 0; }
.plain-btn {
  width: 66px;
  height: 28px;
  margin-top: 17px;
  padding: 0;
  border: 1px solid #767676;
  border-radius: 3px;
  background: #efefef;
  font: 15.4px "Liberation Sans", sans-serif;
  color: #333;
}
.page-title {
  margin: 44.5px 0 10px;
  font-size: 39.6px;
  font-weight: 400;
  line-height: 43.5px;
}
.register-form { display: flex; flex-direction: column; align-items: flex-start; }
.register-form .field-label { margin-bottom: 5.5px; }
.form-input {
  display: block;
  width: 323px;
  height: 37.4px;
  margin-bottom: 16.5px;
  border: 1px solid #ccc;
  border-radius: 4.4px;
  background: #fff;
}
.form-btn {
  width: 86px;
  height: 37.4px;
  padding: 0;
  border: 1px solid #ccc;
  border-radius: 4.4px;
  background: #fff;
  font: 15.4px "Liberation Sans", sans-serif;
  color: #333;
}

/* Post list */
.posts { width: 1034px; border-collapse: collapse; }
.posts td { height: 94px; border: 1px solid #ddd; vertical-align: top; padding: 8px 0 0; }
.votes { width: 66px; text-align: center; }
.arrow { width: 12px; height: 13px; display: block; margin: 3.500px auto 5.500px; }
.score { display: block; height: 22px; }
.posts .post { padding-left: 8px; }
.bubble { width: 14px; height: 13px; margin-right: 5.500px; vertical-align: -1px; }

/* Pagination */
.pagination { display: flex; margin-top: 45px; }
.pg {
  height: 36px;
  margin-left: -1px;
  padding: 0 13.2px;
  display: flex;
  align-items: center;
  border: 1px solid #ddd;
  background: #fff;
  color: #4279aa;
}
.first { margin-left: 0; border-radius: 4px 0 0 4px; }
.last { border-radius: 0 4px 4px 0; }
.active { background: #337ab7; border-color: #337ab7; color: #fff; }

/* Windows taskbar */
.taskbar {
  height: 41px;
  flex: none;
  display: flex;
  background: #1c272d;
  color: #fff;
}
.sys-slot {
  width: 48.700px;
  flex: none;
  display: flex;
  align-items: center;
  justify-content: center;
}
.t-start { width: 16px; height: 16px; }
.t-search { width: 18px; height: 22px; }
.t-cortana { width: 18px; height: 18px; }
.app-slot {
  width: 49px;
  flex: none;
  display: flex;
  align-items: center;
  justify-content: center;
}
.app-slot.open { box-shadow: inset 0 -2px 0 0 #76b9ed, inset 5px 0 0 #1c272d, inset -5px 0 0 #1c272d; }
.app-slot.current { background: #4a555b; box-shadow: inset 0 -2px 0 0 #76b9ed; }
.t-app { width: 24px; height: 24px; }
.tray { margin-left: auto; display: flex; align-items: center; padding-right: 10px; }
.tray-slot { width: 24px; display: flex; justify-content: center; }
.tray-ic { width: 15px; height: 15px; }
.clock {
  width: 64px;
  display: flex;
  flex-direction: column;
  align-items: center;
  font: 12px/18px "Open Sans", sans-serif;
}
.notif { width: 40px; margin-left: 3px; display: flex; justify-content: center; align-items: flex-end; }
.notif-ic { width: 16px; height: 14px; }
.notif-count {
  width: 14px;
  height: 14px;
  margin: 0 0 -5px -5px;
  border: 1px solid #aaa;
  border-radius: 50%;
  background: #333;
  font: 700 9px/12px "Liberation Sans", sans-serif;
  text-align: center;
}
```
